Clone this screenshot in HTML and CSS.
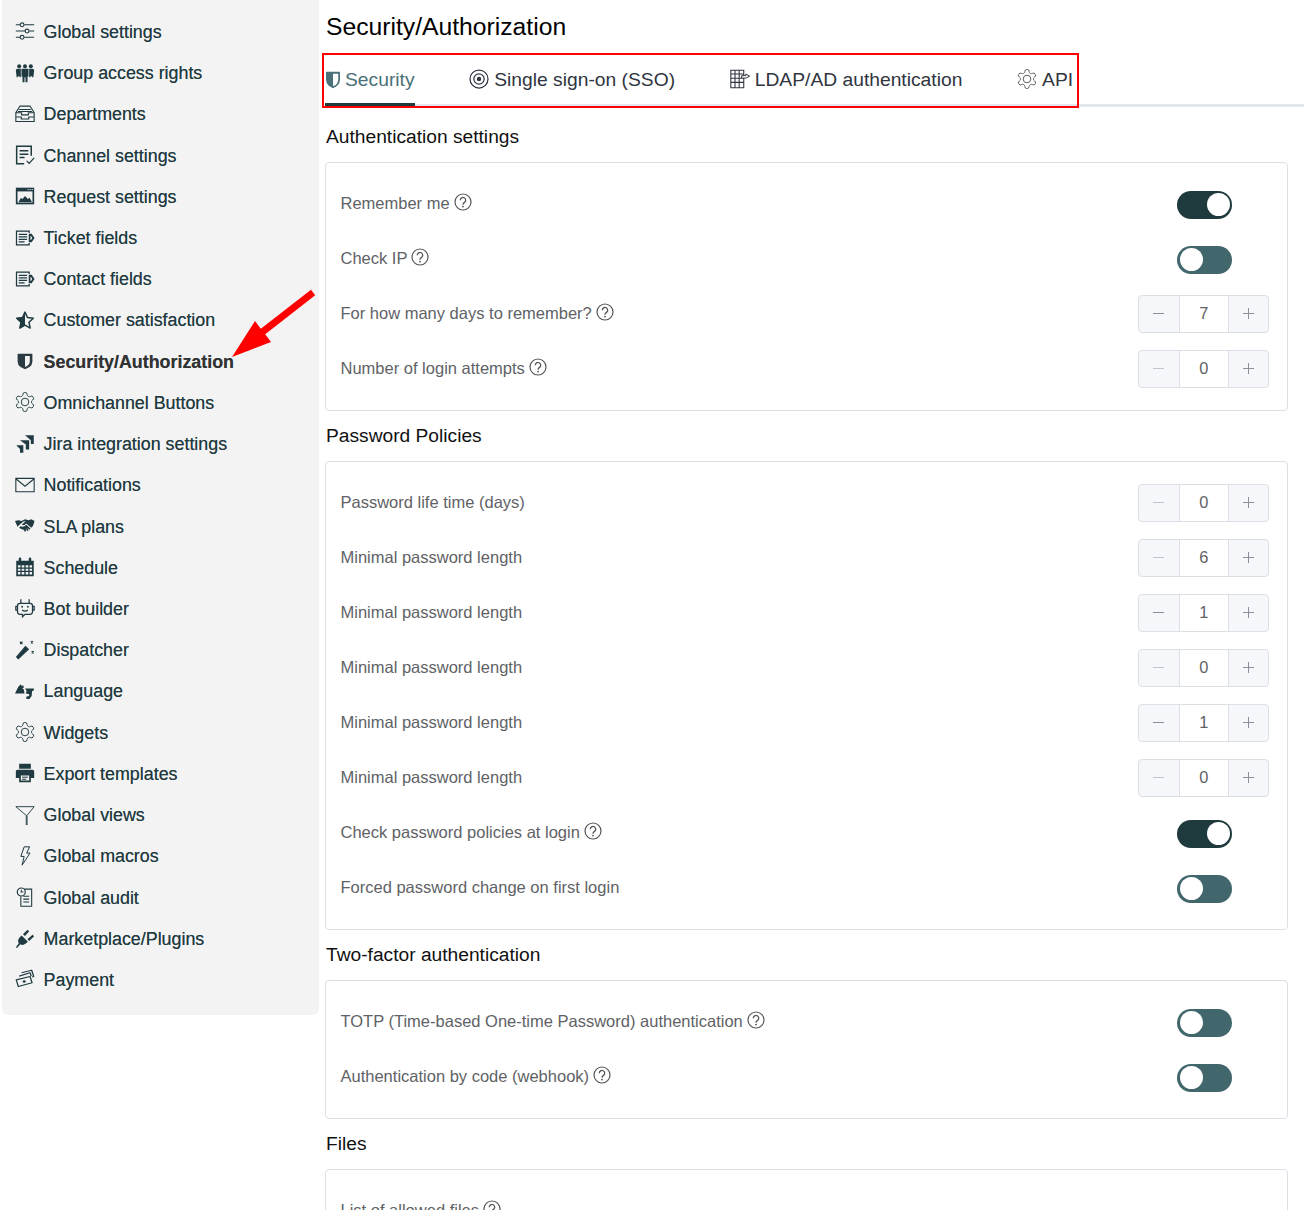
FILE: index.html
```html
<!DOCTYPE html>
<html lang="en">
<head>
<meta charset="utf-8">
<title>Security/Authorization</title>
<link rel="stylesheet" href="styles.css">
</head>
<body>
<svg class="sprite" width="0" height="0" aria-hidden="true">
  <defs>
    <symbol id="gear" viewBox="1.500 1.500 21 21"><path fill="none" stroke="currentColor" stroke-width="1" d="M12.22 2h-.44a2 2 0 0 0-2 2v.18a2 2 0 0 1-1 1.73l-.43.25a2 2 0 0 1-2 0l-.15-.08a2 2 0 0 0-2.73.73l-.22.38a2 2 0 0 0 .73 2.73l.15.1a2 2 0 0 1 1 1.72v.51a2 2 0 0 1-1 1.74l-.15.09a2 2 0 0 0-.73 2.73l.22.38a2 2 0 0 0 2.73.73l.15-.08a2 2 0 0 1 2 0l.43.25a2 2 0 0 1 1 1.73V20a2 2 0 0 0 2 2h.44a2 2 0 0 0 2-2v-.18a2 2 0 0 1 1-1.73l.43-.25a2 2 0 0 1 2 0l.15.08a2 2 0 0 0 2.73-.73l.22-.39a2 2 0 0 0-.73-2.73l-.15-.08a2 2 0 0 1-1-1.74v-.5a2 2 0 0 1 1-1.74l.15-.09a2 2 0 0 0 .73-2.73l-.22-.38a2 2 0 0 0-2.73-.73l-.15.08a2 2 0 0 1-2 0l-.43-.25a2 2 0 0 1-1-1.73V4a2 2 0 0 0-2-2z"/><circle cx="12" cy="12" r="4" fill="none" stroke="currentColor" stroke-width="1"/></symbol>
    <symbol id="fields" viewBox="0 0 24 24"><path fill="none" stroke="currentColor" stroke-width="1.5" d="M17 6V3.800H1.800v16.400H17V18"/><path fill="none" stroke="currentColor" stroke-width="1.500" d="M4.500 7.500h10M4.500 10.500h10M4.500 13.500h10M4.500 16.500h7"/><path fill="currentColor" d="M16.500 7h3.500l3.500 5-3.500 5h-3.500z"/><path fill="#f3f3f3" d="M18.500 9.500h.7l1.500 2.500-1.500 2.500h-.7z"/></symbol>
    <symbol id="help" viewBox="0 0 18 18"><circle cx="9" cy="9" r="8" fill="none" stroke="currentColor" stroke-width="1.200"/><path fill="none" stroke="currentColor" stroke-width="1.300" d="M6.300 7.200A2.700 2.700 0 1 1 10.500 9.400c-1 .6-1.500 1-1.500 2.300"/><circle cx="9" cy="13.600" r=".9" fill="currentColor"/></symbol>
    <symbol id="minus" viewBox="0 0 11 11"><path stroke="currentColor" stroke-width="1" d="M0 5.500h11"/></symbol>
    <symbol id="plus" viewBox="0 0 11 11"><path stroke="currentColor" stroke-width="1" d="M0 5.500h11M5.500 0v11"/></symbol>
  </defs>
</svg>

<div class="page">
  <aside class="sidebar">
    <a class="nav-item"><svg class="nav-icon" viewBox="0 0 24 24"><path fill="none" stroke="currentColor" stroke-width="1.300" d="M1 4.500h5M11 4.500h12M1 12h11M17 12h6M1 19.500h5M11 19.500h12"/><circle cx="8.500" cy="4.500" r="2.300" fill="none" stroke="currentColor" stroke-width="1.300"/><circle cx="14.500" cy="12" r="2.300" fill="none" stroke="currentColor" stroke-width="1.300"/><circle cx="8.500" cy="19.500" r="2.300" fill="none" stroke="currentColor" stroke-width="1.300"/></svg><span>Global settings</span></a>
    <a class="nav-item"><svg class="nav-icon" viewBox="0 0 24 24"><g fill="currentColor"><circle cx="5" cy="4" r="2.400"/><circle cx="12" cy="4" r="2.400"/><circle cx="19" cy="4" r="2.400"/><path d="M1 9Q1 7 3 7h4v10H5.500v-1H3.500v1H2zM7.800 7h8.400v9l-1.200 .5v6.500h-2.400V17h-1.200v6H9V16.500L7.800 16zM17 7h4q2 0 2 2l-1 8h-1.500v-1h-2v1H17z"/></g></svg><span>Group access rights</span></a>
    <a class="nav-item"><svg class="nav-icon" viewBox="0 0 24 24"><path fill="none" stroke="currentColor" stroke-width="1.300" d="M6 2.500h12l5 8v10.500H1V10.500zM1 10.500h7v2.500h8v-2.500h7M1 15.500h6.500v2.500h9v-2.500H23M5 6.500h14M3.500 9h17" /></svg><span>Departments</span></a>
    <a class="nav-item"><svg class="nav-icon" viewBox="0 0 24 24"><path fill="none" stroke="currentColor" stroke-width="1.800" d="M11 22.500H2V1.500h17.500v11.500M5.500 7h10.500M5.500 11h10.500M5.500 15h6"/><path fill="none" stroke="currentColor" stroke-width="1.500" d="M14 19l3 3 6-6.500"/></svg><span>Channel settings</span></a>
    <a class="nav-item"><svg class="nav-icon" viewBox="0 0 24 24"><path fill="currentColor" d="M1 2h22v20H1z"/><path fill="#f3f3f3" d="M3 6.500h18V20H3z"/><path fill="currentColor" d="M4 19.500l3-5 2 1 3-3.500 3.500 3.500 2-1.500 3 5.500z"/><path stroke="#f3f3f3" stroke-width="1" d="M15 4.200h1.500M17.500 4.200h1.500M20 4.200h1.500"/></svg><span>Request settings</span></a>
    <a class="nav-item"><svg class="nav-icon"><use href="#fields"/></svg><span>Ticket fields</span></a>
    <a class="nav-item"><svg class="nav-icon"><use href="#fields"/></svg><span>Contact fields</span></a>
    <a class="nav-item"><svg class="nav-icon" viewBox="0 0 24 24"><path fill="none" stroke="currentColor" stroke-width="1.800" stroke-linejoin="round" d="M12 2.500l3 6.500 7 .9-5.200 4.800 1.400 7L12 18.200 5.800 21.700l1.400-7L2 9.900l7-.9z"/><path fill="currentColor" d="M12 2.500v15.700L5.800 21.700l1.400-7L2 9.900l7-.9z"/></svg><span>Customer satisfaction</span></a>
    <a class="nav-item active"><svg class="nav-icon" viewBox="2 1 20 23" preserveAspectRatio="xMidYMid meet"><path fill="currentColor" d="M3 2h18q1 0 1 1v9q0 5-4 8l-6 3-6-3q-4-3-4-8V3q0-1 1-1z"/><path fill="#f3f3f3" d="M12 5h6.500v7q0 4-3 6L12 20z"/></svg><span>Security/Authorization</span></a>
    <a class="nav-item"><svg class="nav-icon"><use href="#gear"/></svg><span>Omnichannel Buttons</span></a>
    <a class="nav-item"><svg class="nav-icon" viewBox="0 0 24 24"><path fill="currentColor" d="M12 1.500h10.500V12h-3.500V7.500zM6 7.500h11V18.500h-4v-6zM1.500 13.500h8.500v9h-4v-4.500z"/></svg><span>Jira integration settings</span></a>
    <a class="nav-item"><svg class="nav-icon" viewBox="0 0 24 24"><path fill="none" stroke="currentColor" stroke-width="1.300" d="M1 4h22v16H1zM1 4.500l11 9 11-9"/></svg><span>Notifications</span></a>
    <a class="nav-item"><svg class="nav-icon" viewBox="0 0 24 24"><path fill="currentColor" d="M0 6l4-1 4 1 4-2 4.500 1 3-1 4 2-2 6-2 2-6-5-2.500 2-3-.5 5-4.500-3 .5-4 3.500L3 13zM5 14l2-2 1 .8 3-.3 2.500-2 5 4.500-1 1.500-3-2.500 2 3-1.500 1-2.500-3 1 3-1.500.8-2-2.500-2-.3z"/></svg><span>SLA plans</span></a>
    <a class="nav-item"><svg class="nav-icon" viewBox="0 0 24 24"><path fill="currentColor" fill-rule="evenodd" d="M1.500 4.500h3V2a1.500 1.500 0 0 1 3 0v2.500h9V2a1.500 1.500 0 0 1 3 0v2.500h3V23h-21zM3.500 10v2.500h3V10zM8 10v2.500h3.200V10zM12.800 10v2.500H16V10zM17.500 10v2.500h3V10zM3.500 14v2.500h3V14zM8 14v2.500h3.200V14zM12.800 14v2.500H16V14zM17.500 14v2.500h3V14zM3.500 18v3h3v-3zM8 18v3h3.200v-3zM12.800 18v3H16v-3zM17.500 18v3h3v-3z"/></svg><span>Schedule</span></a>
    <a class="nav-item"><svg class="nav-icon" viewBox="0 0 24 24"><path fill="none" stroke="currentColor" stroke-width="1.500" d="M7 1.500V6.500M17 1.500V6.500M6 6.500h12q3 0 3 3v7q0 3-3 3h-6l-3 3v-3H6q-3 0-3-3v-7q0-3 3-3zM3 10H1v4.500h2M21 10h2v4.500h-2M8.500 14.500q3.500 2.500 7 0"/><circle cx="8.500" cy="10.500" r="1.100" fill="currentColor"/><circle cx="15.500" cy="10.500" r="1.100" fill="currentColor"/></svg><span>Bot builder</span></a>
    <a class="nav-item"><svg class="nav-icon" viewBox="0 0 24 24"><path fill="currentColor" d="M1 20.500L12.500 7l4.500 4L4 23.500z"/><path fill="none" stroke="currentColor" stroke-width="1.300" d="M6 2l3 3M9 2L6 5M19 1.500l2.500 2.500M21.500 1.500L19 4M20 13.500l2.500 2.500M22.500 13.500L20 16"/></svg><span>Dispatcher</span></a>
    <a class="nav-item"><svg class="nav-icon" viewBox="0 0 24 24"><path fill="currentColor" d="M0 15L4 7l3-3 1 2 2-1 .5 3-2 1 2 1 1 5H2zM12 9h11l-1 3h-1.500L20 18l-3 4-4-1 1-2.500 3-.5v-2l-4-1 1-3z"/></svg><span>Language</span></a>
    <a class="nav-item"><svg class="nav-icon"><use href="#gear"/></svg><span>Widgets</span></a>
    <a class="nav-item"><svg class="nav-icon" viewBox="0 0 24 24"><path fill="currentColor" fill-rule="evenodd" d="M5 1h14v6H5zM3 8h18q2 0 2 2v8h-4v5H5v-5H1v-8q0-2 2-2zM7 15v6h10v-6z"/><path stroke="currentColor" stroke-width="1.200" d="M8.500 17h7M8.500 19.500h5"/></svg><span>Export templates</span></a>
    <a class="nav-item"><svg class="nav-icon" viewBox="0 0 24 24"><path fill="none" stroke="currentColor" stroke-width="1.100" d="M1 2h22l-8.500 10.500v11.500h-1V12.500z"/></svg><span>Global views</span></a>
    <a class="nav-item"><svg class="nav-icon" viewBox="0 0 24 24"><path fill="none" stroke="currentColor" stroke-width="1.200" stroke-linejoin="round" d="M11 1h6.500l-3.500 7.500h4L8.500 23l2.500-10.500H7z"/></svg><span>Global macros</span></a>
    <a class="nav-item"><svg class="nav-icon" viewBox="0 0 24 24"><circle cx="7.500" cy="6" r="4.800" fill="none" stroke="currentColor" stroke-width="1.400"/><path fill="none" stroke="currentColor" stroke-width="1.300" d="M7.500 3.200V6h2.500M11 2.500h9v20.500H7v-11.500M10 11h7M10 14.500h7M10 18h7"/></svg><span>Global audit</span></a>
    <a class="nav-item"><svg class="nav-icon" viewBox="0 0 24 24"><path fill="currentColor" d="M1 23l3.500-4.500q-2-3.500 1-7L8 9l7.500 7.500-3 2.500q-3 2.500-6 .5L2.500 24zM9.500 7.500L15 2l2 2-5 5.500zM15 13.500L21 8l2 2-6 5.500z"/></svg><span>Marketplace/Plugins</span></a>
    <a class="nav-item"><svg class="nav-icon" viewBox="0 0 24 24"><path fill="none" stroke="currentColor" stroke-width="1.500" stroke-linejoin="round" d="M1.500 13l16.500-4 2.500 7.500L4 21zM5 8.500l13-4 1.500 4M8 4.500l12-3 2.500 7.500-2 .6"/><ellipse cx="11" cy="15" rx="1.800" ry="1.500" fill="currentColor"/></svg><span>Payment</span></a>
  </aside>

  <main class="content">
    <h1 class="page-title">Security/Authorization</h1>
    <nav class="tabs">
      <a class="tab active"><svg class="tab-icon shield" viewBox="2 1 20 23" preserveAspectRatio="none"><path fill="currentColor" d="M3 2h18q1 0 1 1v9q0 5-4 8l-6 3-6-3q-4-3-4-8V3q0-1 1-1z"/><path fill="#fff" d="M12 4.500h7.500v7.500q0 4-3 6.500L12 20.500z"/></svg>Security</a>
      <a class="tab"><svg class="tab-icon" viewBox="0 0 24 24"><circle cx="12" cy="12" r="10.800" fill="none" stroke="currentColor" stroke-width="1.500"/><circle cx="12" cy="12" r="6.200" fill="none" stroke="currentColor" stroke-width="1.500"/><circle cx="12" cy="12" r="2.700" fill="currentColor"/></svg>Single sign-on (SSO)</a>
      <a class="tab"><svg class="tab-icon" viewBox="0 0 24 24"><path fill="none" stroke="currentColor" stroke-width="1.300" d="M1 1.500h15.500v21H1zM1 6h15.500M1 11h15.500M1 16h15.500M6 1.500v21M11 1.500v21"/><path fill="#fff" stroke="currentColor" stroke-width="1.200" d="M14 8h5V6l4.500 2.500L19 11H14z"/></svg>LDAP/AD authentication</a>
      <a class="tab"><svg class="tab-icon gear-tab"><use href="#gear"/></svg>API</a>
    </nav>

    <h2 class="section-title">Authentication settings</h2>
    <section class="card">
      <div class="row"><span class="label">Remember me<svg class="help"><use href="#help"/></svg></span><span class="toggle on"></span></div>
      <div class="row"><span class="label">Check IP<svg class="help"><use href="#help"/></svg></span><span class="toggle"></span></div>
      <div class="row"><span class="label">For how many days to remember?<svg class="help"><use href="#help"/></svg></span><div class="stepper"><span class="step"><svg class="sign"><use href="#minus"/></svg></span><span class="value">7</span><span class="step"><svg class="sign"><use href="#plus"/></svg></span></div></div>
      <div class="row"><span class="label">Number of login attempts<svg class="help"><use href="#help"/></svg></span><div class="stepper"><span class="step off"><svg class="sign"><use href="#minus"/></svg></span><span class="value">0</span><span class="step"><svg class="sign"><use href="#plus"/></svg></span></div></div>
    </section>

    <h2 class="section-title">Password Policies</h2>
    <section class="card">
      <div class="row"><span class="label">Password life time (days)</span><div class="stepper"><span class="step off"><svg class="sign"><use href="#minus"/></svg></span><span class="value">0</span><span class="step"><svg class="sign"><use href="#plus"/></svg></span></div></div>
      <div class="row"><span class="label">Minimal password length</span><div class="stepper"><span class="step off"><svg class="sign"><use href="#minus"/></svg></span><span class="value">6</span><span class="step"><svg class="sign"><use href="#plus"/></svg></span></div></div>
      <div class="row"><span class="label">Minimal password length</span><div class="stepper"><span class="step"><svg class="sign"><use href="#minus"/></svg></span><span class="value">1</span><span class="step"><svg class="sign"><use href="#plus"/></svg></span></div></div>
      <div class="row"><span class="label">Minimal password length</span><div class="stepper"><span class="step off"><svg class="sign"><use href="#minus"/></svg></span><span class="value">0</span><span class="step"><svg class="sign"><use href="#plus"/></svg></span></div></div>
      <div class="row"><span class="label">Minimal password length</span><div class="stepper"><span class="step"><svg class="sign"><use href="#minus"/></svg></span><span class="value">1</span><span class="step"><svg class="sign"><use href="#plus"/></svg></span></div></div>
      <div class="row"><span class="label">Minimal password length</span><div class="stepper"><span class="step off"><svg class="sign"><use href="#minus"/></svg></span><span class="value">0</span><span class="step"><svg class="sign"><use href="#plus"/></svg></span></div></div>
      <div class="row"><span class="label">Check password policies at login<svg class="help"><use href="#help"/></svg></span><span class="toggle on"></span></div>
      <div class="row"><span class="label">Forced password change on first login</span><span class="toggle"></span></div>
    </section>

    <h2 class="section-title">Two-factor authentication</h2>
    <section class="card">
      <div class="row"><span class="label">TOTP (Time-based One-time Password) authentication<svg class="help"><use href="#help"/></svg></span><span class="toggle"></span></div>
      <div class="row"><span class="label">Authentication by code (webhook)<svg class="help"><use href="#help"/></svg></span><span class="toggle"></span></div>
    </section>

    <h2 class="section-title">Files</h2>
    <section class="card">
      <div class="row"><span class="label">List of allowed files<svg class="help"><use href="#help"/></svg></span></div>
    </section>
  </main>
</div>

<div class="callout-box"></div>
<svg class="callout-arrow" viewBox="0 0 90 75"><path fill="#ff0000" d="M82 0.800L86.200 6.200 36.200 45.200 42 53 3 68 26 32 31.800 39.800z"/></svg>
</body>
</html>
```
FILE: styles.css
```css
html, body {
  margin: 0;
  height: 1210px;
  overflow: hidden;
  background: #fff;
  font-family: "Liberation Sans", Arial, sans-serif;
}
.sprite { position: absolute; }
.page { display: flex; align-items: flex-start; }

.sidebar {
  width: 317px;
  margin-left: 2px;
  padding: 11.800px 0 14.200px;
  background: #f3f3f3;
  border-radius: 0 0 6px 6px;
  flex: none;
}
.nav-item {
  display: flex;
  align-items: center;
  height: 41.22px;
  padding-left: 13px;
  gap: 8.600px;
  font-size: 17.850px;
  color: #1f3a40;
  text-shadow: 0 0 .6px rgba(31, 58, 64, .7);
}
.nav-item.active { font-weight: 700; color: #333; }
.nav-item.active .nav-icon { color: #2b3a40; height: 17px; margin-left: 0; }
.nav-icon { width: 20px; height: 20px; flex: none; color: #1f3a40; margin-top: -2px; }

.content { flex: 1; min-width: 0; padding: 9px 16px 0 6px; }
.page-title {
  margin: 0;
  padding-left: 1px;
  font-size: 24.700px;
  line-height: 36px;
  font-weight: 400;
  color: #000;
}
.tabs {
  display: flex;
  gap: 54.700px;
  height: 50px;
  margin: 9px -16px 5px 0;
  border-bottom: 3px solid #e4e6ee;
}
.tab {
  display: flex;
  align-items: center;
  gap: 5px;
  height: 50px;
  padding-top: 2px;
  box-sizing: border-box;
  font-size: 19.250px;
  color: #303540;
  position: relative;
}
.tab.active { color: #4a7078; }
.tab.active::after {
  content: "";
  position: absolute;
  left: 0;
  right: 0;
  bottom: -2px;
  height: 3px;
  background: #1f3a3d;
}
.tab-icon { width: 20px; height: 20px; flex: none; margin-bottom: 2px; }
.tab-icon.shield { width: 14px; height: 18px; margin: 0 0 0 1px; }
.tab-icon.gear-tab { color: #555; }

.section-title {
  margin: 0;
  padding: 0 0 1px 1px;
  font-size: 19.200px;
  line-height: 49px;
  font-weight: 400;
  color: #111;
}
.card {
  border: 1px solid #dcdfe6;
  border-radius: 4px;
  padding: 14px 18px 13px 14.500px;
}
.row {
  display: flex;
  align-items: center;
  justify-content: space-between;
  height: 55px;
}
.label {
  display: inline-flex;
  align-items: center;
  gap: 4px;
  padding-bottom: 3px;
  font-size: 16.500px;
  color: #606266;
}
.help { width: 18px; height: 18px; color: #555; margin-bottom: 2px; }

.toggle {
  position: relative;
  width: 55px;
  height: 28px;
  margin-right: 37px;
  border-radius: 14px;
  background: #41666b;
}
.toggle::after {
  content: "";
  position: absolute;
  top: 2.500px;
  left: 2.500px;
  width: 23px;
  height: 23px;
  border-radius: 50%;
  background: #fff;
}
.toggle.on { background: #1f3a3d; }
.toggle.on::after { left: auto; right: 2px; }

.stepper {
  display: flex;
  width: 131px;
  height: 38px;
  margin-bottom: 1px;
  box-sizing: border-box;
  border: 1px solid #dcdfe6;
  border-radius: 4px;
  background: #f5f7fa;
  overflow: hidden;
}
.step {
  width: 39px;
  display: flex;
  align-items: center;
  justify-content: center;
  padding-bottom: 2px;
  color: #8a8f99;
  flex: none;
}
.step:first-child { width: 39.500px; }
.step.off { color: #c0c4cc; }
.sign { width: 11px; height: 11px; }
.value {
  flex: 1;
  display: flex;
  align-items: center;
  justify-content: center;
  padding-bottom: 2px;
  background: #fff;
  border-left: 1px solid #dcdfe6;
  border-right: 1px solid #dcdfe6;
  font-size: 16.400px;
  color: #606266;
}

.callout-box {
  position: absolute;
  left: 322px;
  top: 53px;
  width: 753px;
  height: 51px;
  border: 2px solid #f00;
}
.callout-arrow {
  position: absolute;
  left: 229px;
  top: 289px;
  width: 90px;
  height: 75px;
}
```
